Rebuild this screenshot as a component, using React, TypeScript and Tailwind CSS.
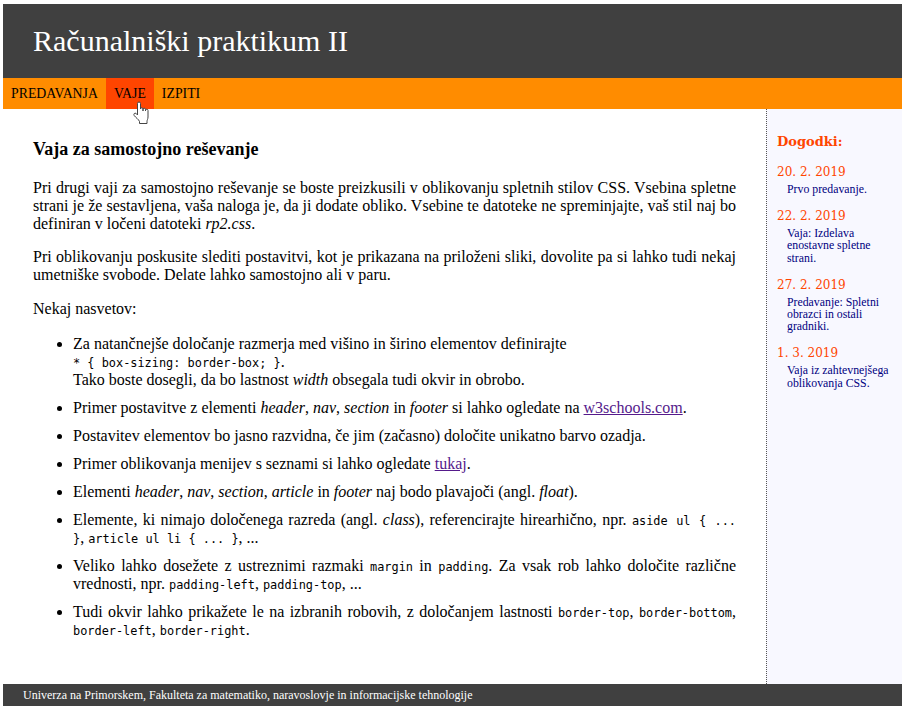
function Code({ children }: { children: React.ReactNode }) {
  return <code className="font-['DejaVu_Sans_Mono',monospace] text-[11.9px] leading-none">{children}</code>;
}

const events = [
  { date: "20. 2. 2019", text: "Prvo predavanje." },
  { date: "22. 2. 2019", text: "Vaja: Izdelava enostavne spletne strani." },
  { date: "27. 2. 2019", text: "Predavanje: Spletni obrazci in ostali gradniki." },
  { date: "1. 3. 2019", text: "Vaja iz zahtevnejšega oblikovanja CSS." },
];

function HandCursor() {
  return (
    <svg className="absolute left-[133px] top-[101px]" width="18" height="25" viewBox="0 0 18 25">
      <path
        d="M4.5 2.500a1.500 1.500 0 0 1 3 0V8a1.250 1.250 0 0 1 2.500 0v2V8.500a1.250 1.250 0 0 1 2.500 0V10V9.500a1.250 1.250 0 0 1 2.500 0V16c0 2-1 3-1 4.500v2H6.500v-2C5.500 18 3 17 1.200 14.500c-1-1.500.5-3 2-2L4.500 14z"
        fill="#fff"
        stroke="#444"
        strokeWidth="1"
      />
    </svg>
  );
}

export default function App() {
  return (
    <div className="h-screen flex flex-col pt-[4px] px-[3px] pb-[3px] font-['Liberation_Serif',serif] text-[16px] text-black leading-[18px] relative overflow-hidden">
      <header className="h-[74px] shrink-0 bg-[#404040] pl-[30px] flex items-center">
        <h1 className="text-[30px] leading-[34px] text-white font-normal">Računalniški praktikum II</h1>
      </header>
      <nav className="h-[31px] shrink-0 bg-[#ff8c00] flex text-[13.8px] items-stretch">
        <a className="px-[8px] flex items-center">PREDAVANJA</a>
        <a className="px-[8px] flex items-center bg-[#ff4500]">VAJE</a>
        <a className="px-[8px] flex items-center">IZPITI</a>
      </nav>
      <div className="flex-1 flex min-h-0">
        <main className="w-[763px] shrink-0 pl-[30px] pr-[30px] pt-[30px]">
          <h2 className="text-[18px] leading-[20px] font-bold mb-[20px]">Vaja za samostojno reševanje</h2>
          <p className="text-justify mb-[15px]">
            Pri drugi vaji za samostojno reševanje se boste preizkusili v oblikovanju spletnih stilov CSS. Vsebina spletne
            strani je že sestavljena, vaša naloga je, da ji dodate obliko. Vsebine te datoteke ne spreminjajte, vaš stil naj bo
            definiran v ločeni datoteki <em>rp2.css</em>.
          </p>
          <p className="text-justify mb-[16px]">
            Pri oblikovanju poskusite slediti postavitvi, kot je prikazana na priloženi sliki, dovolite pa si lahko tudi nekaj
            umetniške svobode. Delate lahko samostojno ali v paru.
          </p>
          <p className="mb-[17px]">Nekaj nasvetov:</p>
          <ul className="list-disc pl-[40px] text-justify flex flex-col gap-[10px]">
            <li>
              Za natančnejše določanje razmerja med višino in širino elementov definirajte
              <br />
              <Code>* {"{"} box-sizing: border-box; {"}"}</Code>.
              <br />
              Tako boste dosegli, da bo lastnost <em>width</em> obsegala tudi okvir in obrobo.
            </li>
            <li>
              Primer postavitve z elementi <em>header</em>, <em>nav</em>, <em>section</em> in <em>footer</em> si lahko ogledate na{" "}
              <a className="underline text-[#551a8b]">w3schools.com</a>.
            </li>
            <li>Postavitev elementov bo jasno razvidna, če jim (začasno) določite unikatno barvo ozadja.</li>
            <li>
              Primer oblikovanja menijev s seznami si lahko ogledate <a className="underline text-[#551a8b]">tukaj</a>.
            </li>
            <li>
              Elementi <em>header</em>, <em>nav</em>, <em>section</em>, <em>article</em> in <em>footer</em> naj bodo plavajoči (angl. <em>float</em>).
            </li>
            <li>
              Elemente, ki nimajo določenega razreda (angl. <em>class</em>), referencirajte hirearhično, npr.{" "}
              <Code>aside ul {"{"} ... {"}"}</Code>, <Code>article ul li {"{"} ... {"}"}</Code>, ...
            </li>
            <li>
              Veliko lahko dosežete z ustreznimi razmaki <Code>margin</Code> in <Code>padding</Code>. Za vsak rob lahko določite različne
              vrednosti, npr. <Code>padding-left</Code>, <Code>padding-top</Code>, ...
            </li>
            <li>
              Tudi okvir lahko prikažete le na izbranih robovih, z določanjem lastnosti <Code>border-top</Code>, <Code>border-bottom</Code>,{" "}
              <Code>border-left</Code>, <Code>border-right</Code>.
            </li>
          </ul>
        </main>
        <aside className="flex-1 bg-[#f8f8ff] border-l border-dotted border-[#555] pl-[10px] pr-[10px] pt-[25px] font-['Liberation_Serif',serif] text-[11.8px] leading-[12.33px] text-[#000080]">
          <h3 className="font-['DejaVu_Serif',serif] text-[13px] leading-[16px] font-bold text-[#ff4500] mb-[15px]">Dogodki:</h3>
          {events.map((ev) => (
            <div key={ev.date} className="mb-[13.67px]">
              <div className="font-['DejaVu_Serif',serif] text-[12px] leading-[15px] text-[#ff4500] mb-[3px]">{ev.date}</div>
              <p className="pl-[10px]">{ev.text}</p>
            </div>
          ))}
        </aside>
      </div>
      <footer className="h-[22px] shrink-0 bg-[#404040] text-white text-[12px] pl-[20px] flex items-center">
        Univerza na Primorskem, Fakulteta za matematiko, naravoslovje in informacijske tehnologije
      </footer>
      <HandCursor />
    </div>
  );
}
